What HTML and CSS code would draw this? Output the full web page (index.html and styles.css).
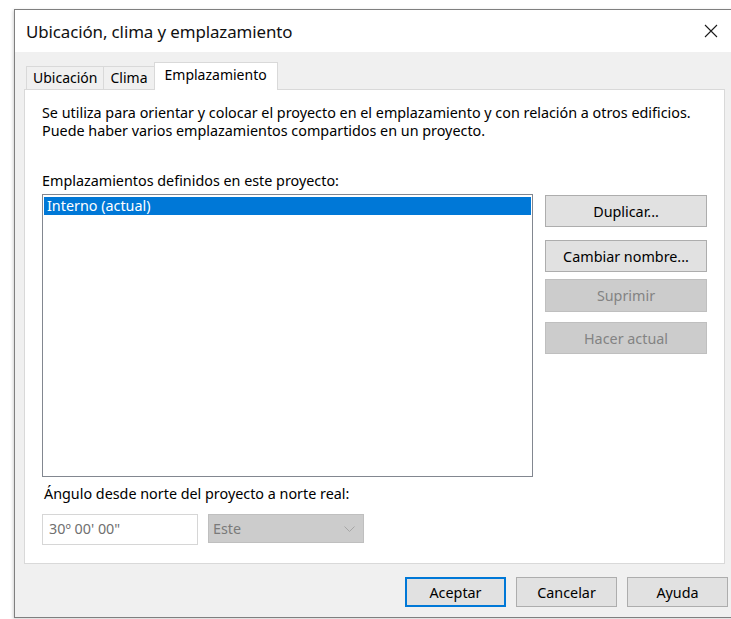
FILE: index.html
```html
<!DOCTYPE html>
<html lang="es">
<head>
<meta charset="utf-8">
<title>Ubicación, clima y emplazamiento</title>
<link rel="stylesheet" href="styles.css">
</head>
<body>
<div class="window">
  <div class="titlebar">
    <span class="title">Ubicación, clima y emplazamiento</span>
    <svg class="close" width="14" height="14" viewBox="0 0 14 14"><path d="M1 1 L13 13 M13 1 L1 13" stroke="#1a1a1a" stroke-width="1.1" fill="none"/></svg>
  </div>
  <div class="client">
    <div class="tabs">
      <div class="tab">Ubicación</div>
      <div class="tab">Clima</div>
      <div class="tab active">Emplazamiento</div>
    </div>
    <div class="panel">
      <p class="desc">Se utiliza para orientar y colocar el proyecto en el emplazamiento y con relación a otros edificios.<br>Puede haber varios emplazamientos compartidos en un proyecto.</p>
      <div class="label">Emplazamientos definidos en este proyecto:</div>
      <div class="sites">
        <div class="listbox">
          <div class="item selected">Interno (actual)</div>
        </div>
        <div class="actions">
          <button class="btn act">Duplicar...</button>
          <button class="btn act second">Cambiar nombre...</button>
          <button class="btn act third" disabled>Suprimir</button>
          <button class="btn act fourth" disabled>Hacer actual</button>
        </div>
      </div>
      <div class="label angle-label">Ángulo desde norte del proyecto a norte real:</div>
      <div class="angle-row">
        <div class="field">30º 00' 00"</div>
        <div class="combo">
          <span>Este</span>
          <svg width="11" height="6" viewBox="0 0 11 6"><path d="M0.5 0.5 L5.5 5.5 L10.5 0.5" stroke="#a6a6a6" stroke-width="1" fill="none"/></svg>
        </div>
      </div>
    </div>
    <div class="footer">
      <button class="btn foot default">Aceptar</button>
      <button class="btn foot">Cancelar</button>
      <button class="btn foot">Ayuda</button>
    </div>
    <svg class="grip" width="12" height="11" viewBox="0 0 12 11">
      <rect x="9" y="0" width="2" height="2" fill="#c4c4c4"/>
      <rect x="5" y="4" width="2" height="2" fill="#c4c4c4"/>
      <rect x="9" y="4" width="2" height="2" fill="#c4c4c4"/>
      <rect x="1" y="8" width="2" height="2" fill="#c4c4c4"/>
      <rect x="5" y="8" width="2" height="2" fill="#c4c4c4"/>
      <rect x="9" y="8" width="2" height="2" fill="#c4c4c4"/>
    </svg>
  </div>
</div>
</body>
</html>
```

FILE: styles.css
```css
html, body {
  margin: 0;
  padding: 0;
  background: #ffffff;
  overflow: hidden;
  width: 731px;
  height: 619px;
}

body {
  font-family: "Noto Sans", "Open Sans", sans-serif;
  font-size: 14.35px;
  color: #000;
}

.window {
  margin: 9px 0 0 14px;
  width: 730px;
  height: 607px;
  border: 1px solid #7f7f7f;
  border-right: none;
  box-shadow: -1px 1px 3px rgba(0, 0, 0, 0.18);
  display: flex;
  flex-direction: column;
  background: #f0f0f0;
}

.titlebar {
  height: 42px;
  background: #ffffff;
  display: flex;
  align-items: center;
  padding-left: 11px;
  flex: none;
}

.title {
  font-size: 16.9px;
  color: #111;
  letter-spacing: -0.1px;
}

.close {
  margin-left: 412px;
}

.client {
  flex: 1;
  position: relative;
  padding: 10px 0 0 9px;
}

.tabs {
  display: flex;
  margin-left: 2px;
  height: 27px;
  align-items: flex-end;
}

.tab {
  height: 23px;
  box-sizing: border-box;
  border: 1px solid #d9d9d9;
  border-bottom: none;
  border-right: none;
  background: #f0f0f0;
  padding: 0 6px;
  line-height: 22px;
  font-size: 14px;
}

.tab.active {
  height: 28px;
  margin-bottom: -1px;
  background: #ffffff;
  border-right: 1px solid #d9d9d9;
  padding: 0 10px;
  line-height: 24px;
  position: relative;
  z-index: 1;
}

.panel {
  width: 701px;
  height: 475px;
  box-sizing: border-box;
  border: 1px solid #d9d9d9;
  background: #ffffff;
  padding: 14px 17px 0 17px;
  display: flex;
  flex-direction: column;
}

.desc {
  margin: 0;
  line-height: 18px;
}

.label {
  line-height: 18px;
  margin-top: 32px;
}

.sites {
  display: flex;
  margin-top: 4px;
}

.listbox {
  width: 491px;
  height: 283px;
  box-sizing: border-box;
  border: 1px solid #828790;
  padding: 2px 1px;
}

.item {
  height: 18px;
  line-height: 17px;
  padding-left: 3px;
}

.item.selected {
  background: #0078d7;
  color: #ffffff;
}

.actions {
  display: flex;
  flex-direction: column;
  margin-left: 12px;
  padding-top: 1px;
}

.btn {
  font-family: inherit;
  font-size: 14.35px;
  color: #000;
  background: #e1e1e1;
  border: 1px solid #adadad;
  box-sizing: border-box;
  padding: 0;
  margin: 0;
}

.btn:disabled {
  background: #cccccc;
  border-color: #bfbfbf;
  color: #838383;
}

.act {
  width: 162px;
  height: 32px;
}

.act.second {
  margin-top: 13px;
}

.act.third {
  margin-top: 7px;
  height: 33px;
}

.act.fourth {
  margin-top: 10px;
}

.angle-label {
  margin-top: 8px;
  padding-left: 2px;
}

.angle-row {
  display: flex;
  margin-top: 11px;
}

.field {
  width: 156px;
  height: 31px;
  box-sizing: border-box;
  border: 1px solid #d6d6d6;
  line-height: 28px;
  padding-left: 6px;
  color: #707070;
}

.combo {
  width: 156px;
  height: 29px;
  margin-left: 10px;
  box-sizing: border-box;
  border: 1px solid #bfbfbf;
  background: #cccccc;
  color: #7a7a7a;
  display: flex;
  align-items: center;
  justify-content: space-between;
  padding: 0 8px 0 4px;
}

.footer {
  display: flex;
  justify-content: flex-start;
  margin-top: 13px;
  padding-left: 381px;
}

.foot {
  width: 101px;
  height: 30px;
  margin-right: 10px;
}

.foot.default {
  border: 2px solid #0078d7;
}

.grip {
  position: absolute;
  right: 1px;
  bottom: 0px;
}
```
